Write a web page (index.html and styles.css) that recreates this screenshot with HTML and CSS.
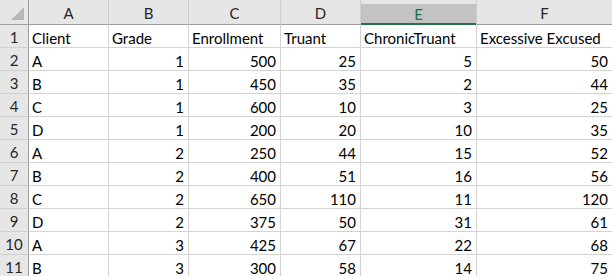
FILE: index.html
```html
<!DOCTYPE html>
<html>
<head>
<meta charset="utf-8">
<link rel="stylesheet" href="styles.css">
</head>
<body>
<div class="sheet">
  <div class="hd corner"><svg class="tri" width="14" height="14" viewBox="0 0 14 14"><polygon points="13,0 13,13 0,13" fill="#b7b7b7"/></svg></div>
  <div class="hd col">A</div>
  <div class="hd col">B</div>
  <div class="hd col">C</div>
  <div class="hd col">D</div>
  <div class="hd col sel"><span>E</span></div>
  <div class="hd col last">F</div>

  <div class="hd row">1</div><div class="c">Client</div><div class="c">Grade</div><div class="c">Enrollment</div><div class="c">Truant</div><div class="c">ChronicTruant</div><div class="c">Excessive Excused</div>
  <div class="hd row">2</div><div class="c">A</div><div class="c n">1</div><div class="c n">500</div><div class="c n">25</div><div class="c n">5</div><div class="c n">50</div>
  <div class="hd row">3</div><div class="c">B</div><div class="c n">1</div><div class="c n">450</div><div class="c n">35</div><div class="c n">2</div><div class="c n">44</div>
  <div class="hd row">4</div><div class="c">C</div><div class="c n">1</div><div class="c n">600</div><div class="c n">10</div><div class="c n">3</div><div class="c n">25</div>
  <div class="hd row">5</div><div class="c">D</div><div class="c n">1</div><div class="c n">200</div><div class="c n">20</div><div class="c n">10</div><div class="c n">35</div>
  <div class="hd row">6</div><div class="c">A</div><div class="c n">2</div><div class="c n">250</div><div class="c n">44</div><div class="c n">15</div><div class="c n">52</div>
  <div class="hd row">7</div><div class="c">B</div><div class="c n">2</div><div class="c n">400</div><div class="c n">51</div><div class="c n">16</div><div class="c n">56</div>
  <div class="hd row">8</div><div class="c">C</div><div class="c n">2</div><div class="c n">650</div><div class="c n">110</div><div class="c n">11</div><div class="c n">120</div>
  <div class="hd row">9</div><div class="c">D</div><div class="c n">2</div><div class="c n">375</div><div class="c n">50</div><div class="c n">31</div><div class="c n">61</div>
  <div class="hd row">10</div><div class="c">A</div><div class="c n">3</div><div class="c n">425</div><div class="c n">67</div><div class="c n">22</div><div class="c n">68</div>
  <div class="hd row">11</div><div class="c">B</div><div class="c n">3</div><div class="c n">300</div><div class="c n">58</div><div class="c n">14</div><div class="c n">75</div>
</div>
</body>
</html>
```

FILE: styles.css
```css
html, body {
  margin: 0;
  padding: 0;
  background: #ffffff;
}
.sheet {
  display: grid;
  grid-template-columns: 29px 80px 80px 92px 80px 116px 136px;
  grid-template-rows: 25px repeat(11, 23px);
  font-family: "Lato", "Open Sans", sans-serif;
  font-size: 15px;
  color: #000;
  width: 613px;
}
.hd {
  background: #e6e6e6;
  box-sizing: border-box;
  display: flex;
  align-items: center;
  justify-content: center;
  color: #262626;
}
.col {
  border-right: 1px solid #d0d0d0;
  border-bottom: 1px solid #9e9e9e;
  padding-top: 2px;
}
.corner {
  border-right: 1px solid #9e9e9e;
  border-bottom: 1px solid #9e9e9e;
  position: relative;
}
.tri {
  position: absolute;
  right: 3px;
  bottom: 3px;
}
.row {
  border-right: 1px solid #9e9e9e;
  border-bottom: 1px solid #d0d0d0;
  padding-top: 2px;
}
.sel {
  padding: 4px 0 0 0;
  border-bottom: none;
  align-items: stretch;
}
.sel span {
  flex: 1;
  background: #c3c3c3;
  border-bottom: 2px solid #217346;
  color: #217346;
  display: flex;
  align-items: center;
  justify-content: center;
  padding-top: 0;
}
.c {
  box-sizing: border-box;
  border-right: 1px solid #d4d4d4;
  border-bottom: 1px solid #d4d4d4;
  padding: 3px 3px 0 3px;
  display: flex;
  align-items: center;
  white-space: nowrap;
  overflow: hidden;
}
.n {
  justify-content: flex-end;
  padding-right: 4px;
}
```
